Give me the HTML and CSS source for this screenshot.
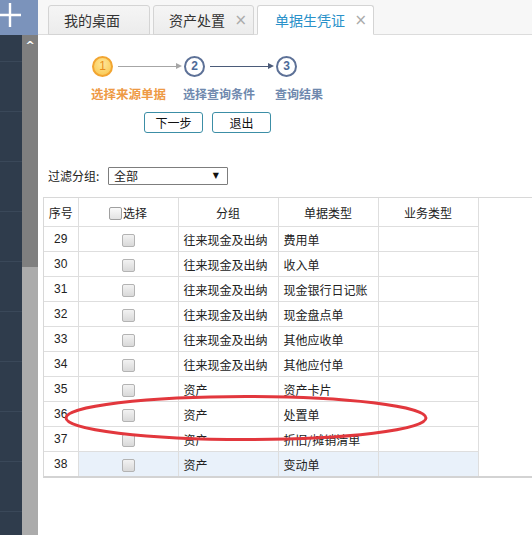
FILE: index.html
```html
<!DOCTYPE html>
<html lang="zh">
<head>
<meta charset="utf-8">
<link rel="stylesheet" href="styles.css">
</head>
<body>
<div class="app">
  <aside class="side">
    <div class="side-top">
      <svg class="plus" width="24" height="26" viewBox="0 0 24 26"><path d="M11 1v24M0 13h22" stroke="#fff" stroke-width="2.4" fill="none"/></svg>
    </div>
    <div class="side-body">
      <div class="side-menu">
        <div class="side-item first"></div>
        <div class="side-item"></div>
        <div class="side-item"></div>
        <div class="side-item"></div>
        <div class="side-item"></div>
        <div class="side-item"></div>
        <div class="side-item"></div>
        <div class="side-item"></div>
        <div class="side-item"></div>
        <div class="side-item"></div>
      </div>
      <div class="side-scroll">
        <div class="thumb"><span class="caret">^</span></div>
      </div>
    </div>
  </aside>
  <main class="main">
    <nav class="tabs">
      <div class="tab">我的桌面</div>
      <div class="tab">资产处置<span class="x">×</span></div>
      <div class="tab active">单据生凭证<span class="x">×</span></div>
    </nav>
    <section class="content">
      <div class="steps">
        <div class="step done">
          <div class="step-row"><span class="circle c1">1</span><span class="line grey"></span></div>
          <div class="label orange">选择来源单据</div>
        </div>
        <div class="step">
          <div class="step-row"><span class="circle">2</span><span class="line dark"></span></div>
          <div class="label">选择查询条件</div>
        </div>
        <div class="step">
          <div class="step-row"><span class="circle">3</span></div>
          <div class="label">查询结果</div>
        </div>
      </div>
      <div class="buttons">
        <button class="btn">下一步</button>
        <button class="btn">退出</button>
      </div>
      <div class="filter">
        <span class="filter-label">过滤分组:</span>
        <div class="select"><span>全部</span><span class="arrow">▼</span></div>
      </div>
      <div class="grid-wrap">
        <table class="grid">
          <colgroup>
            <col class="c-no"><col class="c-sel"><col class="c-grp"><col class="c-type"><col class="c-biz">
          </colgroup>
          <thead>
            <tr>
              <th>序号</th>
              <th><span class="cb"></span>选择</th>
              <th>分组</th>
              <th>单据类型</th>
              <th>业务类型</th>
            </tr>
          </thead>
          <tbody>
            <tr><td class="num">29</td><td class="sel"><span class="cb"></span></td><td>往来现金及出纳</td><td>费用单</td><td></td></tr>
            <tr><td class="num">30</td><td class="sel"><span class="cb"></span></td><td>往来现金及出纳</td><td>收入单</td><td></td></tr>
            <tr><td class="num">31</td><td class="sel"><span class="cb"></span></td><td>往来现金及出纳</td><td>现金银行日记账</td><td></td></tr>
            <tr><td class="num">32</td><td class="sel"><span class="cb"></span></td><td>往来现金及出纳</td><td>现金盘点单</td><td></td></tr>
            <tr><td class="num">33</td><td class="sel"><span class="cb"></span></td><td>往来现金及出纳</td><td>其他应收单</td><td></td></tr>
            <tr><td class="num">34</td><td class="sel"><span class="cb"></span></td><td>往来现金及出纳</td><td>其他应付单</td><td></td></tr>
            <tr><td class="num">35</td><td class="sel"><span class="cb"></span></td><td>资产</td><td>资产卡片</td><td></td></tr>
            <tr><td class="num">36</td><td class="sel"><span class="cb"></span></td><td>资产</td><td>处置单</td><td></td></tr>
            <tr><td class="num">37</td><td class="sel"><span class="cb"></span></td><td>资产</td><td>折旧/摊销清单</td><td></td></tr>
            <tr class="hl"><td class="num">38</td><td class="sel"><span class="cb"></span></td><td>资产</td><td>变动单</td><td></td></tr>
          </tbody>
        </table>
      </div>
    </section>
  </main>
</div>
<svg class="mark" width="532" height="535" viewBox="0 0 532 535"><ellipse cx="246" cy="418" rx="180" ry="21.5" fill="none" stroke="#e2373d" stroke-width="3"/></svg>
</body>
</html>
```
FILE: styles.css
```css
html, body {
  margin: 0;
  padding: 0;
  background: #fff;
}
body {
  width: 532px;
  height: 535px;
  overflow: hidden;
  position: relative;
  font-family: "Noto Sans CJK SC", "Liberation Sans", sans-serif;
  font-size: 12px;
  color: #222;
}
.app {
  display: flex;
  height: 535px;
}
.side {
  width: 38px;
  flex: none;
  display: flex;
  flex-direction: column;
}
.side-top {
  height: 35px;
  background: #7b93bb;
  overflow: hidden;
}
.plus {
  display: block;
  margin: 2px 0 0 -1px;
}
.side-body {
  flex: 1;
  display: flex;
}
.side-menu {
  width: 22px;
  background: #2f3c4c;
}
.side-item {
  height: 49px;
  border-bottom: 1px solid #3a4859;
}
.side-item.first {
  height: 26px;
}
.side-scroll {
  width: 16px;
  background: #ababab;
}
.thumb {
  height: 232px;
  background: #7f7f7f;
  text-align: center;
}
.caret {
  display: block;
  color: #fff;
  font-family: "DejaVu Sans", sans-serif;
  font-size: 11px;
  font-weight: bold;
  line-height: 12px;
  padding-top: 5px;
}
.main {
  flex: 1;
  display: flex;
  flex-direction: column;
  min-width: 0;
}
.tabs {
  height: 35px;
  box-sizing: border-box;
  background: #f7f7f7;
  border-bottom: 1px solid #dcdcdc;
  display: flex;
  align-items: flex-end;
  gap: 3px;
  padding-left: 10px;
}
.tab {
  height: 30px;
  box-sizing: border-box;
  margin-bottom: -1px;
  border: 1px solid #d4d4d4;
  border-radius: 3px 3px 0 0;
  background: linear-gradient(#f5f5f5, #ececec);
  font-size: 14px;
  line-height: 28px;
  color: #333;
  padding: 0 15px 0 15px;
  display: flex;
  align-items: center;
}
.tab:first-child {
  width: 102px;
}
.tab:nth-child(2) {
  width: 101px;
  padding-right: 6px;
}
.tab.active {
  width: 117px;
  background: #fff;
  border-bottom-color: #fff;
  color: #2a91c9;
  padding-right: 6px;
  padding-left: 17px;
}
.x {
  margin-left: auto;
  color: #aaa;
  font-family: "DejaVu Sans", sans-serif;
  font-size: 15px;
}
.content {
  flex: 1;
  position: relative;
}
.steps {
  display: flex;
  padding: 21px 0 0 54px;
}
.step {
  width: 92px;
}
.step-row {
  display: flex;
  align-items: center;
  height: 20px;
}
.circle {
  width: 21px;
  height: 21px;
  box-sizing: border-box;
  border-radius: 50%;
  border: 2px solid #5d7197;
  background: #fff;
  color: #4d6a98;
  font-family: "Liberation Sans", sans-serif;
  font-weight: bold;
  font-size: 12px;
  line-height: 17px;
  text-align: center;
  flex: none;
}
.circle.c1 {
  border-color: #f2a531;
  background: radial-gradient(circle at 50% 35%, #ffe79a, #f8c448);
  color: #e88d1a;
  font-weight: normal;
}
.line {
  position: relative;
  height: 1px;
  width: 59px;
  margin-left: 5px;
}
.line::after {
  content: "";
  position: absolute;
  right: -5px;
  top: -3px;
  border-left: 6px solid;
  border-top: 3.5px solid transparent;
  border-bottom: 3.5px solid transparent;
  border-left-color: inherit;
}
.line.grey {
  background: #a6a6a6;
  border-color: #a6a6a6;
}
.line.dark {
  background: #4b5b79;
  border-color: #4b5b79;
}
.label {
  margin-top: 10px;
  margin-left: -1px;
  font-weight: bold;
  font-size: 12px;
  line-height: 16px;
  color: #6f89ae;
  white-space: nowrap;
}
.label.orange {
  color: #ee9a45;
  font-size: 12.5px;
}
.buttons {
  display: flex;
  gap: 9px;
  padding: 10px 0 0 106px;
}
.btn {
  width: 59px;
  height: 21px;
  box-sizing: border-box;
  border: 1px solid #3c8ea6;
  border-radius: 3px;
  background: #fff;
  font-family: "Noto Sans CJK SC", sans-serif;
  font-size: 12px;
  line-height: 17px;
  padding: 0;
  color: #111;
}
.filter {
  display: flex;
  align-items: center;
  padding: 34px 0 0 10px;
}
.filter-label {
  width: 60px;
  line-height: 18px;
}
.select {
  width: 120px;
  height: 18px;
  box-sizing: border-box;
  border: 1px solid #7d7d7d;
  border-radius: 1px;
  display: flex;
  align-items: center;
  padding: 0 8px 0 5px;
  line-height: 16px;
}
.arrow {
  margin-left: auto;
  font-family: "DejaVu Sans", sans-serif;
  font-size: 8px;
  color: #111;
}
.grid-wrap {
  margin: 12px 0 0 5px;
  border-top: 1px solid #d8d8d8;
  border-left: 1px solid #d8d8d8;
  border-bottom: 2px solid #d3d3d3;
}
.grid {
  border-collapse: collapse;
  table-layout: fixed;
  width: 434px;
}
.c-no { width: 34px; }
.c-sel { width: 100px; }
.c-grp { width: 100px; }
.c-type { width: 100px; }
.c-biz { width: 100px; }
.grid th, .grid td {
  border: 1px solid #dedede;
  padding: 0 5px;
  font-weight: normal;
  white-space: nowrap;
  overflow: hidden;
}
.grid tr:first-child th {
  border-top: none;
}
.grid th:first-child, .grid td:first-child {
  border-left: none;
}
.grid tbody tr:last-child td {
  border-bottom: none;
}
.grid th {
  height: 28px;
  font-size: 12px;
  text-align: center;
  padding: 0;
}
.grid td {
  height: 24px;
  font-size: 12px;
}
.grid .num {
  text-align: center;
  font-family: "Liberation Sans", sans-serif;
  padding: 0;
}
.grid .sel {
  text-align: center;
}
.grid tr.hl td {
  background: #e9f1fa;
}
.grid tr.hl td.num {
  background: #fff;
}
.cb {
  display: inline-block;
  width: 11px;
  height: 11px;
  border: 1px solid #b3b3b3;
  border-radius: 2px;
  background: linear-gradient(#f2f2f2, #d9d9d9);
  vertical-align: -2px;
}
th .cb {
  margin-right: 1px;
  background: linear-gradient(#fafafa, #e3e3e3);
  border-color: #a0a0a0;
}
.mark {
  position: absolute;
  left: 0;
  top: 0;
  pointer-events: none;
}
```
